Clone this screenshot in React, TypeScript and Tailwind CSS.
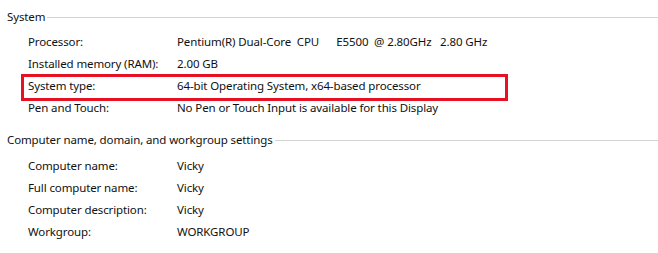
const systemRows: [string, string][] = [
  ['Processor:', 'Pentium(R) Dual-Core  CPU      E5500  @ 2.80GHz   2.80 GHz'],
  ['Installed memory (RAM):', '2.00 GB'],
  ['System type:', '64-bit Operating System, x64-based processor'],
  ['Pen and Touch:', 'No Pen or Touch Input is available for this Display'],
];

const computerRows: [string, string][] = [
  ['Computer name:', 'Vicky'],
  ['Full computer name:', 'Vicky'],
  ['Computer description:', 'Vicky'],
  ['Workgroup:', 'WORKGROUP'],
];

function SectionHeading({ title }: { title: string }) {
  return (
    <div className="flex items-center h-[22px] pl-[7px]">
      <span className="whitespace-pre">{title}</span>
      <div className="flex-1 h-px bg-[#d4d4d4] ml-[2px] mt-[1px]" />
    </div>
  );
}

function Row({ label, value, marked }: { label: string; value: string; marked?: boolean }) {
  return (
    <div className="relative flex items-center h-[22px] pl-[28px]">
      {marked && (
        <span className="absolute left-[21px] top-[-1px] w-[487px] h-[27px] border-[3px] border-[#e81123]" />
      )}
      <span className="w-[149px] whitespace-pre">{label}</span>
      <span className="whitespace-pre">{value}</span>
    </div>
  );
}

export default function App() {
  return (
    <div
      className="w-[658px] h-[253px] bg-white text-[#111] text-[11.5px] tracking-[-0.12px] pt-[6px] overflow-hidden"
      style={{ fontFamily: '"Noto Sans", "Open Sans", sans-serif' }}
    >
      <SectionHeading title="System" />
      <div className="mt-[3px]">
        {systemRows.map(([label, value]) => (
          <Row key={label} label={label} value={value} marked={label === 'System type:'} />
        ))}
      </div>
      <div className="mt-[10px]">
        <SectionHeading title="Computer name, domain, and workgroup settings" />
      </div>
      <div className="mt-[4px]">
        {computerRows.map(([label, value]) => (
          <Row key={label} label={label} value={value} />
        ))}
      </div>
    </div>
  );
}
